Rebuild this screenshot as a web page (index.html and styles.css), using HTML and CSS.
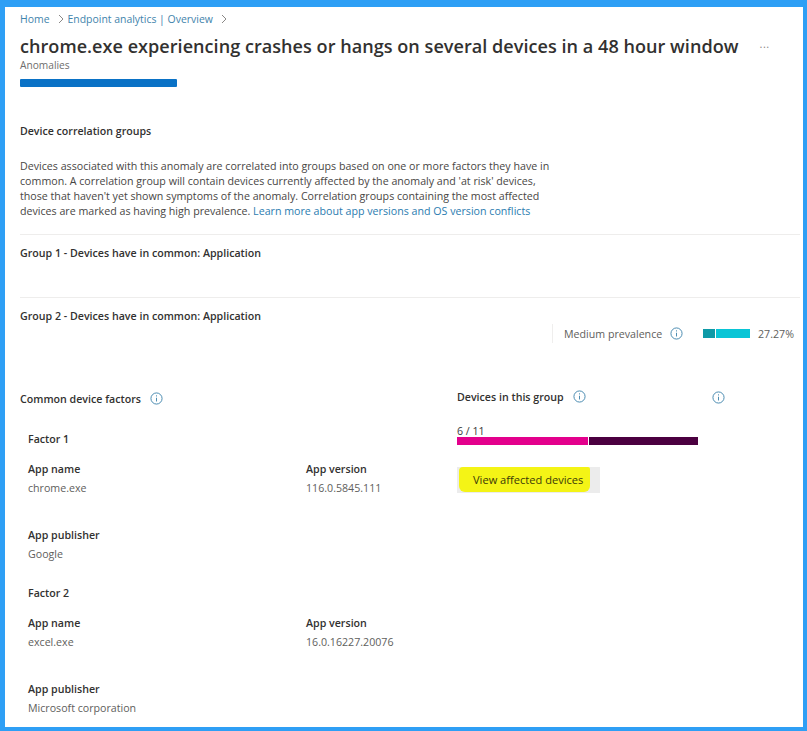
FILE: index.html
```html
<!DOCTYPE html>
<html lang="en">
<head>
<meta charset="utf-8">
<title>chrome.exe anomaly</title>
<link rel="stylesheet" href="styles.css">
</head>
<body>
<div class="frame">
  <nav class="crumbs">
    <a>Home</a><svg class="chev" viewBox="0 0 8 10"><path d="M2 1l4 4-4 4" /></svg>
    <a>Endpoint analytics | Overview</a><svg class="chev" viewBox="0 0 8 10"><path d="M2 1l4 4-4 4" /></svg>
  </nav>
  <header class="head">
    <h1>chrome.exe experiencing crashes or hangs on several devices in a 48 hour window</h1>
    <span class="more">...</span>
  </header>
  <div class="sub">Anomalies</div>
  <div class="tabbar"></div>
  <h2 class="section">Device correlation groups</h2>
  <p class="intro">Devices associated with this anomaly are correlated into groups based on one or more factors they have in common. A correlation group will contain devices currently affected by the anomaly and 'at risk' devices, those that haven't yet shown symptoms of the anomaly. Correlation groups containing the most affected devices are marked as having high prevalence. <a>Learn more about app versions and OS version conflicts</a></p>
  <section class="group g1"><h3>Group 1 - Devices have in common: Application</h3></section>
  <section class="group g2">
    <h3>Group 2 - Devices have in common: Application</h3>
    <div class="prev">
      <span class="prev-label">Medium prevalence</span>
      <svg class="info" viewBox="0 0 14 14"><circle cx="7" cy="7" r="6"/><path d="M7 6.2v4M7 3.6v1.2"/></svg>
      <span class="meter"><i class="m1"></i><i class="m2"></i></span>
      <span class="pct">27.27%</span>
    </div>
  </section>
  <div class="cols">
    <div class="left">
      <div class="col-title"><b>Common device factors</b><svg class="info" viewBox="0 0 14 14"><circle cx="7" cy="7" r="6"/><path d="M7 6.2v4M7 3.6v1.2"/></svg></div>
      <div class="factor">
        <h4>Factor 1</h4>
        <div class="pairs">
          <div><b>App name</b><span>chrome.exe</span></div>
          <div><b>App version</b><span>116.0.5845.111</span></div>
          <div><b>App publisher</b><span>Google</span></div>
        </div>
      </div>
      <div class="factor">
        <h4>Factor 2</h4>
        <div class="pairs">
          <div><b>App name</b><span>excel.exe</span></div>
          <div><b>App version</b><span>16.0.16227.20076</span></div>
          <div><b>App publisher</b><span>Microsoft corporation</span></div>
        </div>
      </div>
    </div>
    <div class="right">
      <div class="col-title rt"><b>Devices in this group</b><svg class="info" viewBox="0 0 14 14"><circle cx="7" cy="7" r="6"/><path d="M7 6.2v4M7 3.6v1.2"/></svg><svg class="info far" viewBox="0 0 14 14"><circle cx="7" cy="7" r="6"/><path d="M7 6.2v4M7 3.6v1.2"/></svg></div>
      <div class="count">6 / 11</div>
      <div class="stack"><i class="s1"></i><i class="s2"></i></div>
      <div class="btn"><span class="hl">View affected devices</span></div>
    </div>
  </div>
</div>
</body>
</html>
```

FILE: styles.css
```css
* { box-sizing: border-box; }
html, body { margin: 0; height: 731px; overflow: hidden; }
body { font-family: "Open Sans", "Noto Sans", sans-serif; color: #3b3a39; background: #fff; }
.frame {
  height: 731px;
  border-style: solid;
  border-color: #2e9ff5;
  border-width: 7px 4px 4px 5px;
  padding: 0 0 0 15px;
  font-size: 10.65px;
  overflow: hidden;
}
a { color: #2b7cb0; }
.crumbs { display: flex; align-items: center; height: 24px; font-size: 10.45px; }
.crumbs a { color: #3f84ac; }
.chev { width: 8px; height: 10px; margin: 0 3px 0 7px; fill: none; stroke: #8a8886; stroke-width: 1; }
.head { display: flex; align-items: center; height: 30px; }
h1 { margin: 0; font-size: 18.07px; font-weight: 600; color: #323130; white-space: nowrap; line-height: 30px; letter-spacing: .03px; }
.more { margin: -6px 0 0 21px; color: #8a8886; font-size: 11px; letter-spacing: .5px; }
.sub { height: 12px; line-height: 10px; margin-top: -1px; color: #6e6d6c; font-size: 10.2px; }
.tabbar { width: 157px; height: 8px; margin-top: 7px; background: #0a72c6; border-radius: 1px; }
h2.section { margin: 37px 0 0; font-size: 10.6px; font-weight: 600; color: #323130; line-height: 15px; height: 35px; }
.intro { width: 535px; margin: 0; line-height: 15px; font-size: 10.67px; color: #484644; height: 75px; }
.group { border-top: 1px solid #eeedec; margin-right: 3px; }
.group h3 { margin: 0; font-size: 10.65px; font-weight: 600; color: #323130; line-height: 15px; padding-top: 11px; }
.g1 { height: 63px; }
.g2 { height: 94px; }
.prev { display: flex; align-items: center; margin: 0 0 0 532px; height: 19px; padding-left: 11px; border-left: 1px solid #efeeed; }
.prev-label { color: #605e5c; width: 106px; }
.info { width: 13px; height: 13px; fill: none; stroke: #3f84ac; stroke-width: 1; flex: none; }
.meter { display: flex; gap: 1px; margin-left: 20px; }
.meter i { display: block; height: 9px; }
.m1 { width: 12px; background: #0e9aa7; }
.m2 { width: 34px; background: #09c5d6; }
.pct { margin-left: 8px; color: #605e5c; }
.cols { display: flex; }
.left { width: 437px; }
.right { flex: 1; }
.col-title { display: flex; align-items: center; height: 15px; }
.col-title b { font-weight: 600; color: #323130; }
.col-title .info { margin-left: 9px; }
.rt { margin-top: -2px; }
.rt .far { margin-left: 126px; margin-top: 1px; }
.factor { padding-left: 8px; }
.factor h4 { margin: 26px 0 0; font-size: 10.6px; font-weight: 600; color: #323130; line-height: 15px; }
.factor + .factor h4 { margin-top: 24px; }
.pairs { display: grid; grid-template-columns: 278px 1fr; margin-top: 15px; row-gap: 32px; }
.pairs b { display: block; font-weight: 600; color: #323130; line-height: 15px; }
.pairs span { display: block; margin-top: 4px; line-height: 15px; color: #605e5c; }
.count { margin-top: 22px; height: 11px; line-height: 10px; color: #3b3a39; }
.stack { display: flex; gap: 1px; width: 241px; height: 8px; }
.stack i { display: block; height: 8px; }
.s1 { width: 131px; background: #e3008c; }
.s2 { width: 109px; background: #4b0040; }
.btn { width: 143px; height: 26px; margin-top: 22px; background: #ececec; display: flex; }
.hl { display: block; width: 131px; height: 25px; margin-left: 2px; line-height: 25px; padding-left: 14px; font-size: 11.1px; background: #f4f416; color: #3a3908; border-radius: 4px 2px 6px 6px; white-space: nowrap; }
```
